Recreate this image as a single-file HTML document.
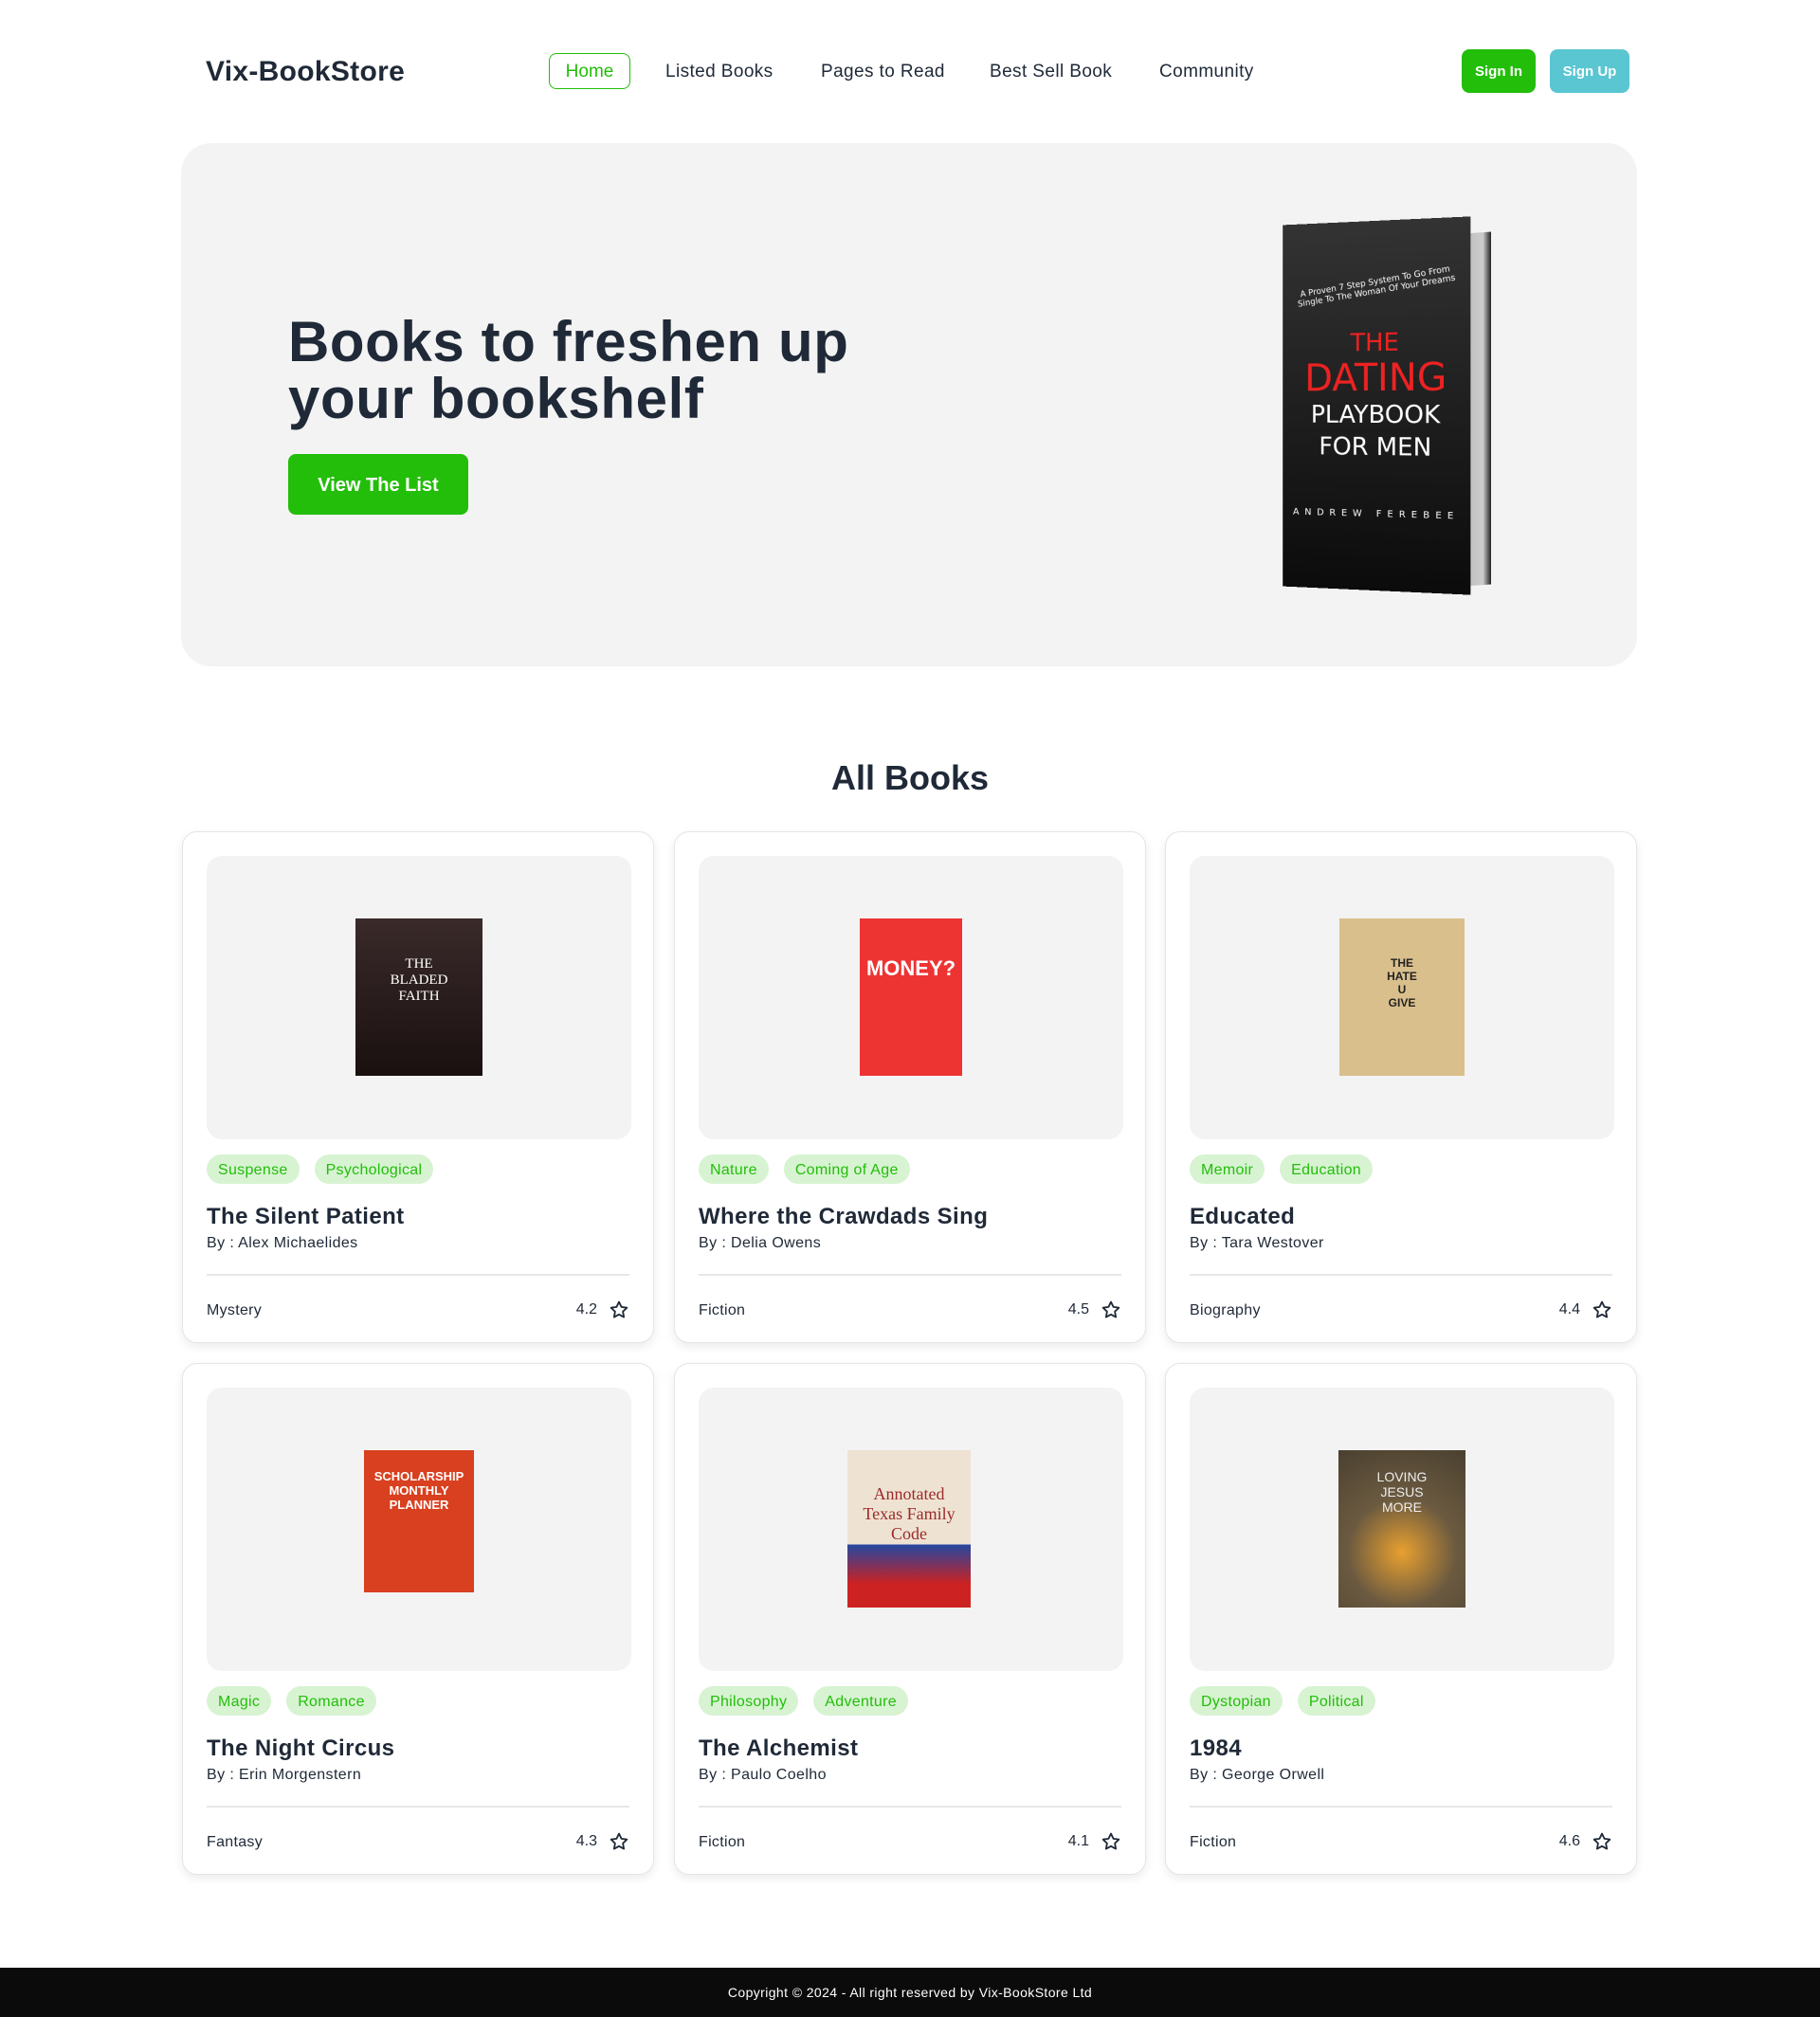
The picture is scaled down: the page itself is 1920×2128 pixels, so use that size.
<!DOCTYPE html>
<html><head><meta charset="utf-8"><style>
*{box-sizing:border-box;margin:0;padding:0}
body{width:1920px;height:2128px;background:#fff;font-family:"Liberation Sans",sans-serif;color:#1f2937;position:relative;overflow:hidden}
.abs{position:absolute}
.logo{left:217px;top:59px;font-size:30px;font-weight:bold;color:#1f2937;letter-spacing:0.3px}
.nav a{position:absolute;top:65px;font-size:19px;color:#1f2937;text-decoration:none;letter-spacing:0.4px}
.home{left:579px;top:56px;width:86px;height:38px;border:1.5px solid #23be0a;border-radius:8px;color:#23be0a;font-size:19px;text-align:center;line-height:38px}
.btn{top:52px;height:46px;border-radius:8px;color:#fff;font-weight:bold;font-size:15px;text-align:center;line-height:48px}
.hero{left:191px;top:151px;width:1536px;height:552px;background:#f3f3f3;border-radius:32px}
h1{position:absolute;left:304px;top:331px;font-size:60px;line-height:60px;color:#1f2937;letter-spacing:0.6px}
.vbtn{left:304px;top:479px;width:190px;height:64px;background:#23be0a;color:#fff;border-radius:8px;font-size:20px;font-weight:bold;text-align:center;line-height:66px}
.h2{left:0;width:1920px;top:800px;text-align:center;font-size:36px;font-weight:bold}
.card{position:absolute;width:498px;height:540px;border:1px solid #e5e5e5;border-radius:16px;background:#fff;box-shadow:0 4px 10px rgba(0,0,0,.08)}
.img{position:absolute;left:25px;top:25px;width:448px;height:299px;background:#f3f3f3;border-radius:16px}
.cov{position:absolute;left:157px;top:66px;width:134px;height:166px;overflow:hidden;font-weight:bold;text-align:center}
.tags{position:absolute;left:25px;top:340px}
.tag{display:inline-block;height:31px;line-height:33px;padding:0 12px;background:#d7f3d2;color:#23be0a;border-radius:16px;font-size:16px;margin-right:16px;letter-spacing:0.3px}
.t{position:absolute;left:25px;top:392px;font-size:24px;font-weight:bold;letter-spacing:0.4px}
.by{position:absolute;left:25px;top:425px;font-size:16px;letter-spacing:0.4px}
.ln{position:absolute;left:25px;right:25px;top:466px;border-top:2px solid #e7e7e7}
.cat{position:absolute;left:25px;top:496px;font-size:16px;letter-spacing:0.3px}
.rt{position:absolute;right:25px;top:493px;font-size:16px;display:flex;align-items:center;gap:12px}
.foot{left:0;top:2076px;width:1920px;height:52px;background:#0b0b0b;color:#fff;text-align:center;line-height:52px;font-size:14px;letter-spacing:0.4px}
</style></head><body>
<svg width="0" height="0" style="position:absolute"><defs><symbol id="st" viewBox="0 0 24 24"><path d="M12 2.8l2.8 5.8 6.3.9-4.6 4.4 1.1 6.3L12 17.2l-5.6 3 1.1-6.3-4.6-4.4 6.3-.9z" fill="none" stroke="#1f2937" stroke-width="2" stroke-linejoin="round"/></symbol></defs></svg>
<div class="abs logo">Vix-BookStore</div>
<div class="abs home">Home</div>
<div class="nav"><a style="left:702px">Listed Books</a><a style="left:866px">Pages to Read</a><a style="left:1044px">Best Sell Book</a><a style="left:1223px">Community</a></div>
<div class="abs btn" style="left:1542px;width:78px;background:#23be0a">Sign In</div>
<div class="abs btn" style="left:1635px;width:84px;background:#59c6d2">Sign Up</div>
<div class="abs hero"></div>
<h1>Books to freshen up<br>your bookshelf</h1>
<div class="abs vbtn">View The List</div>
<div class="abs" style="left:1530px;top:246px;width:43px;height:372px;background:linear-gradient(90deg,#333,#bbb 30%,#ccc 80%,#222);transform:skewY(-4deg)"></div>
<div class="abs" style="left:1350px;top:233px;width:200px;height:390px;background:linear-gradient(180deg,#333,#0b0b0b);transform:perspective(600px) rotateY(-8deg);color:#fff;text-align:center;font-family:'DejaVu Sans',sans-serif">
<div style="font-size:9px;margin-top:60px;transform:rotate(-8deg)">A Proven 7 Step System To Go From<br>Single To The Woman Of Your Dreams</div>
<div style="color:#e22;font-size:26px;margin-top:34px">THE</div>
<div style="color:#e22;font-size:40px;line-height:44px">DATING</div>
<div style="font-size:26px;line-height:34px">PLAYBOOK<br>FOR MEN</div>
<div style="font-size:10px;letter-spacing:6px;margin-top:48px">ANDREW FEREBEE</div>
</div>
<div class="abs h2">All Books</div>

<div class="card" style="left:192px;top:877px"><div class="img"><div class="cov" style="background:linear-gradient(#3a2a2a,#1a1010);color:#fff;font-family:'Liberation Serif',serif;font-weight:normal;font-size:15px;padding-top:40px">THE<br>BLADED<br>FAITH</div></div><div class="tags"><span class="tag">Suspense</span><span class="tag">Psychological</span></div><div class="t">The Silent Patient</div><div class="by">By : Alex Michaelides</div><div class="ln"></div><div class="cat">Mystery</div><div class="rt">4.2 <svg width="22" height="22"><use href="#st"/></svg></div></div>
<div class="card" style="left:711px;top:877px"><div class="img"><div class="cov" style="left:170px;width:108px;background:#e33;color:#fff;font-size:22px;padding-top:40px">MONEY?</div></div><div class="tags"><span class="tag">Nature</span><span class="tag">Coming of Age</span></div><div class="t">Where the Crawdads Sing</div><div class="by">By : Delia Owens</div><div class="ln"></div><div class="cat">Fiction</div><div class="rt">4.5 <svg width="22" height="22"><use href="#st"/></svg></div></div>
<div class="card" style="left:1229px;top:877px"><div class="img"><div class="cov" style="left:158px;width:132px;background:#d9bf8c;color:#222;font-size:12px;padding-top:40px">THE<br>HATE<br>U<br>GIVE</div></div><div class="tags"><span class="tag">Memoir</span><span class="tag">Education</span></div><div class="t">Educated</div><div class="by">By : Tara Westover</div><div class="ln"></div><div class="cat">Biography</div><div class="rt">4.4 <svg width="22" height="22"><use href="#st"/></svg></div></div>

<div class="card" style="left:192px;top:1438px"><div class="img"><div class="cov" style="left:166px;width:116px;height:150px;background:#d8401f;color:#fff;font-size:13px;padding-top:20px">SCHOLARSHIP<br>MONTHLY<br>PLANNER</div></div><div class="tags"><span class="tag">Magic</span><span class="tag">Romance</span></div><div class="t">The Night Circus</div><div class="by">By : Erin Morgenstern</div><div class="ln"></div><div class="cat">Fantasy</div><div class="rt">4.3 <svg width="22" height="22"><use href="#st"/></svg></div></div>
<div class="card" style="left:711px;top:1438px"><div class="img"><div class="cov" style="left:157px;width:130px;background:linear-gradient(#eee3d2 60%,#2447a0 60%,#c22 85%);color:#9b2a2a;font-family:'Liberation Serif',serif;font-weight:normal;font-size:18px;padding-top:36px">Annotated<br>Texas Family<br>Code</div></div><div class="tags"><span class="tag">Philosophy</span><span class="tag">Adventure</span></div><div class="t">The Alchemist</div><div class="by">By : Paulo Coelho</div><div class="ln"></div><div class="cat">Fiction</div><div class="rt">4.1 <svg width="22" height="22"><use href="#st"/></svg></div></div>
<div class="card" style="left:1229px;top:1438px"><div class="img"><div class="cov" style="left:157px;width:134px;background:radial-gradient(circle at 50% 65%,#e8a030,#6b5a40 45%,#4a4030);color:#eee;font-weight:normal;font-size:14px;padding-top:20px">LOVING<br>JESUS<br>MORE</div></div><div class="tags"><span class="tag">Dystopian</span><span class="tag">Political</span></div><div class="t">1984</div><div class="by">By : George Orwell</div><div class="ln"></div><div class="cat">Fiction</div><div class="rt">4.6 <svg width="22" height="22"><use href="#st"/></svg></div></div>

<div class="abs foot">Copyright © 2024 - All right reserved by Vix-BookStore Ltd</div>
</body></html>
